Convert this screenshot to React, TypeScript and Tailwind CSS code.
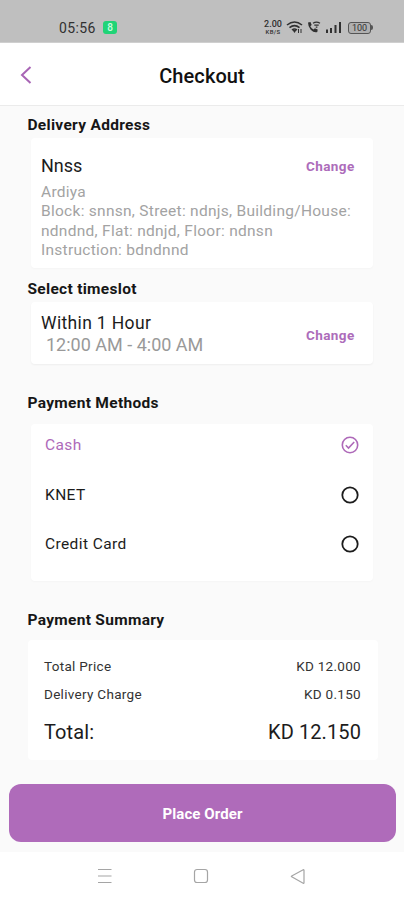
import React from "react";

function StatusBar() {
  return (
    <div className="flex h-[43px] shrink-0 items-start border-b border-[#cfcfcf] bg-[#bfbfbf] pt-[20px] pr-[31px] pl-[59px] text-[#303030]">
      <span className="w-[37px] text-[14px] leading-[16px] tracking-[0.4px] whitespace-nowrap">05:56</span>
      <span className="mt-px ml-[7px] flex h-[13px] w-[14px] items-center justify-center rounded-[3px] bg-[#20d477] text-[10px] leading-none font-medium text-[#c8ffe0]">
        8
      </span>
      <div className="ml-auto flex h-[15px] items-center">
        <div className="flex w-[20px] flex-col items-center gap-px font-medium whitespace-nowrap">
          <span className="h-[7px] text-[9px] leading-[7px]">2.00</span>
          <span className="h-[6px] text-[6px] leading-[6px] tracking-[0.3px]">KB/S</span>
        </div>
        <svg className="ml-[3px]" width="17" height="15" viewBox="0 0 17 15" fill="none" stroke="currentColor" strokeWidth="1.6">
          <path d="M1 5Q8.5-1 16 5M3.5 7.6Q8.5 3.5 13.5 7.6M6 10Q8.5 8 11 10" />
          <path d="M6.5 10h4l-2 3z" fill="currentColor" stroke="none" />
          <path d="M12.5 9v4M15 9v4" strokeWidth="1" />
        </svg>
        <svg className="ml-[4px]" width="14" height="15" viewBox="0 0 14 15">
          <path
            d="M1 2.500l2.500-.5 1.200 3-1.400 1.200q1.200 2.300 3.300 3.300l1.300-1.300 2.800 1.200-.4 2.600Q7.200 13.200 3.700 9.700 1 6.800 1 2.500z"
            fill="currentColor"
          />
          <path d="M6 3.200Q9.500 1 13 3.200M7.300 5.200h4.400M8.800 7.200h1.600" fill="none" stroke="currentColor" strokeWidth="1.200" />
        </svg>
        <svg className="ml-[4px]" width="17" height="15" viewBox="0 0 17 15" fill="currentColor">
          <path d="M1 9.500h2V13H1zM5 8h2v5H5zM9.500 5h2v8h-2zM14 2h2v11h-2z" />
        </svg>
        <div className="ml-[6px] flex h-[12px] w-[23px] items-center justify-center rounded-[3px] border border-[#555] bg-[#b0b0b0] text-[9px] leading-none">
          <span className="mt-px">100</span>
        </div>
        <div className="h-[5px] w-[2px] rounded-r bg-[#555]" />
      </div>
    </div>
  );
}

function Header() {
  return (
    <header className="grid h-[63px] shrink-0 grid-cols-[60px_1fr_60px] items-center border-b border-[#ebebeb] bg-white">
      <svg className="mt-[2px] ml-[20px]" width="12" height="18" viewBox="0 0 12 18" fill="none" stroke="#a865b5" strokeWidth="2">
        <path d="M10.500 1L2 9l8.500 8" />
      </svg>
      <h1 className="mt-[3px] text-center text-[20px] leading-6 font-medium tracking-[0.1px] text-[#111]">Checkout</h1>
    </header>
  );
}

const heading =
  "ml-[27.500px] h-5 shrink-0 whitespace-nowrap text-[15.500px] font-bold leading-[21px] tracking-[0.3px] text-[#161616]";
const change = "w-[49px] whitespace-nowrap text-[13.500px] font-bold leading-4 tracking-[0.4px] text-[#ad6cba]";

function Option({ name, selected = false }: { name: string; selected?: boolean }) {
  return (
    <div className={`flex h-[49.500px] items-center justify-between ${selected ? "text-[#ae69b9]" : "text-[#1c1c1c]"}`}>
      <span className="text-[15.500px] leading-5 tracking-[0.4px]">{name}</span>
      <svg width="18" height="18" viewBox="0 0 18 18" fill="none" stroke="currentColor" strokeWidth={selected ? 1.6 : 1.8}>
        <circle cx="9" cy="9" r="7.700" />
        {selected && <path d="M4.800 9.300l2.700 2.700 5.700-6" />}
      </svg>
    </div>
  );
}

export default function App() {
  return (
    <div className="flex h-[900px] w-[404px] flex-col overflow-hidden bg-[#fafafa] font-[Roboto,sans-serif]">
      <StatusBar />
      <Header />

      <h2 className={`${heading} mt-[9px]`}>Delivery Address</h2>
      <section className="mt-[3px] ml-[31px] h-[130px] w-[342px] shrink-0 rounded-[4px] bg-white pt-[16px] pr-[18px] pl-[10px] shadow-[0_1px_2px_rgba(0,0,0,0.025)]">
        <div className="flex h-[24px] items-center justify-between">
          <span className="text-[18px] leading-6 text-[#1c1c1c]">Nnss</span>
          <span className={change}>Change</span>
        </div>
        <div className="mt-[5px] text-[15.500px] leading-[19.300px] tracking-[0.28px] whitespace-nowrap text-[#a3a3a3]">
          <p>Ardiya</p>
          <p>Block: snnsn, Street: ndnjs, Building/House:</p>
          <p>ndndnd, Flat: ndnjd, Floor: ndnsn</p>
          <p>Instruction: bdndnnd</p>
        </div>
      </section>

      <h2 className={`${heading} mt-[11px]`}>Select timeslot</h2>
      <section className="mt-[3px] ml-[31px] flex h-[62px] w-[342px] shrink-0 items-center justify-between rounded-[4px] bg-white pt-[2px] pr-[18px] pl-[10px] shadow-[0_1px_2px_rgba(0,0,0,0.05)]">
        <div>
          <p className="text-[17.500px] leading-[21px] tracking-[0.35px] whitespace-nowrap text-[#1c1c1c]">Within 1 Hour</p>
          <p className="ml-[5px] text-[18px] leading-[21px] whitespace-nowrap text-[#999]">12:00 AM - 4:00 AM</p>
        </div>
        <span className={`${change} mt-px`}>Change</span>
      </section>

      <h2 className={`${heading} mt-[29px]`}>Payment Methods</h2>
      <section className="mt-[11px] ml-[31px] h-[157px] w-[342px] shrink-0 rounded-[4px] bg-white pr-[14px] pl-[14px] shadow-[0_1px_2px_rgba(0,0,0,0.025)]">
        <div className="-mt-[3.500px]">
          <Option name="Cash" selected />
          <Option name="KNET" />
          <Option name="Credit Card" />
        </div>
      </section>

      <h2 className={`${heading} mt-[29px]`}>Payment Summary</h2>
      <section className="mt-[10px] ml-[28px] h-[120px] w-[350px] shrink-0 rounded-[4px] bg-white pt-[12px] pr-[17px] pl-[16px] text-[#333]">
        <div className="flex h-[28px] items-center justify-between text-[13.500px] tracking-[0.3px]">
          <span>Total Price</span>
          <span>KD 12.000</span>
        </div>
        <div className="flex h-[28px] items-center justify-between text-[13.500px] tracking-[0.3px]">
          <span>Delivery Charge</span>
          <span>KD 0.150</span>
        </div>
        <div className="flex h-[47px] items-center justify-between text-[20px] tracking-[0.1px] text-[#1c1c1c]">
          <span>Total:</span>
          <span>KD 12.150</span>
        </div>
      </section>

      <div className="h-[92px] shrink-0 px-[9px] pt-[24px]">
        <button className="flex h-[58px] w-[387px] items-center justify-center rounded-[12px] bg-[#af6bba] pt-[2px] text-[15px] font-bold tracking-[0.1px] text-white">
          Place Order
        </button>
      </div>

      <nav className="flex h-[48px] shrink-0 items-center bg-white pl-[96px] text-[#a5a5a5]">
        <svg width="210" height="18" viewBox="0 0 210 18" fill="none" stroke="currentColor" strokeWidth="1.200">
          <path d="M2 2.500h13.500M2 9h13.500M2 15.500h13.500" />
          <rect x="98.500" y="2.500" width="13" height="13" rx="2.500" />
          <path d="M208 3.200v12.600q0 .8-.8.400L195.700 9.800q-.7-.4 0-.8L207.200 2.800q.8-.4.800.4z" />
        </svg>
      </nav>
    </div>
  );
}
